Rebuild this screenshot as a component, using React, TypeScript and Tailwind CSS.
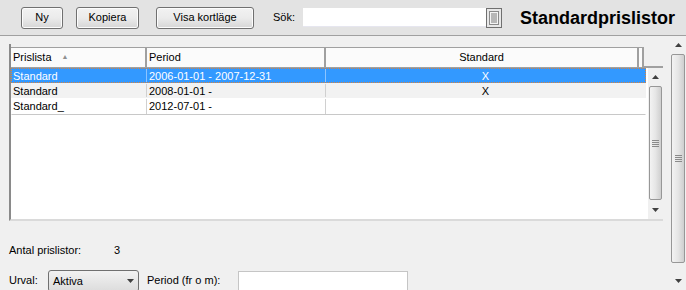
import React from 'react';

const rows = [
  { name: 'Standard', period: '2006-01-01 - 2007-12-31', std: 'X' },
  { name: 'Standard', period: '2008-01-01 -', std: 'X' },
  { name: 'Standard_', period: '2012-07-01 -', std: '' },
];

const Button: React.FC<{ label: string; width: string }> = ({ label, width }) => (
  <button
    className={`${width} h-[22px] rounded-[3px] border border-[#707070] bg-gradient-to-b from-[#f2f2f2] via-[#ebebeb] to-[#d6d6d6] text-[11px] text-black shadow-[inset_0_0_0_1px_#fcfcfc]`}
  >
    {label}
  </button>
);

const Grip: React.FC = () => (
  <div className="flex flex-col gap-[1px]">
    <div className="h-[1px] w-[7px] bg-[#8a8a8a]" />
    <div className="h-[1px] w-[7px] bg-[#8a8a8a]" />
    <div className="h-[1px] w-[7px] bg-[#8a8a8a]" />
    <div className="h-[1px] w-[7px] bg-[#8a8a8a]" />
  </div>
);

const Arrow: React.FC<{ up?: boolean }> = ({ up }) => (
  <svg width="7" height="4" viewBox="0 0 7 4">
    {up ? <path d="M0 4 L3.5 0 L7 4 Z" fill="#404040" /> : <path d="M0 0 L7 0 L3.5 4 Z" fill="#404040" />}
  </svg>
);

const ScrollBar: React.FC<{ top: string; thumb: string; bottom: string }> = ({ top, thumb, bottom }) => (
  <div className="flex h-full flex-col bg-[#f0f0f0]">
    <div className={`${top} flex items-center justify-center`}>
      <Arrow up />
    </div>
    <div
      className={`${thumb} mx-[1px] flex items-center justify-center rounded-[2px] border border-[#979797] bg-gradient-to-r from-[#f3f3f3] via-[#e6e6e6] to-[#cfcfcf]`}
    >
      <Grip />
    </div>
    <div className="flex-1" />
    <div className={`${bottom} flex items-center justify-center`}>
      <Arrow />
    </div>
  </div>
);

export default function App() {
  return (
    <div
      className="flex h-[290px] w-[686px] flex-col overflow-hidden bg-[#f0f0f0] text-[11px] text-black"
      style={{ fontFamily: '"Liberation Sans", Arial, sans-serif' }}
    >
      {/* toolbar */}
      <div className="flex h-[36px] shrink-0 items-center border-b border-[#a0a0a0] bg-[#e3e3e3] pl-[21px]">
        <Button label="Ny" width="w-[42px]" />
        <div className="ml-[13px]">
          <Button label="Kopiera" width="w-[63px]" />
        </div>
        <div className="ml-[17px]">
          <Button label="Visa kortläge" width="w-[98px]" />
        </div>
        <span className="ml-[19px]">Sök:</span>
        <div className="ml-[8px] flex h-[20px] items-center">
          <div className="h-[19px] w-[183px] border-b border-[#e6e6ef] bg-white" />
          <div className="flex h-[20px] w-[16px] items-center justify-center border border-[#707070] bg-[#e8e8e8]">
            <svg width="10" height="14" viewBox="0 0 10 14">
              <rect x="0.5" y="0.5" width="9" height="13" fill="#f4f4f4" stroke="#8a8a8a" />
              <path d="M2 3h6M2 5h6M2 7h6M2 9h6M2 11h6" stroke="#7a7a7a" strokeWidth="1" />
            </svg>
          </div>
        </div>
        <span className="ml-[18px] text-[18px] font-bold leading-none">Standardprislistor</span>
      </div>

      <div className="flex min-h-0 flex-1">
        {/* main content */}
        <div className="flex-1 pl-[9px] pt-[8px]">
          {/* grid */}
          <div className="flex h-[177px] w-[654px] flex-col border-l-2 border-b-2 border-l-[#8a8a8a] border-b-[#dadada] bg-white">
            {/* header */}
            <div className="flex h-[24px] shrink-0 border-b-2 border-[#a0a0a0] bg-[#f0f0f0] pt-[3px]">
              <div className="flex h-[20px] w-[136px] items-center border-r-2 border-t border-r-[#a0a0a0] border-t-[#a0a0a0] bg-[#fbfbfb] pl-[2px]">
                Prislista
                <span className="ml-[10px] text-[7px] text-[#909090]">▲</span>
              </div>
              <div className="flex h-[20px] w-[179px] items-center border-r-2 border-t border-r-[#a0a0a0] border-t-[#a0a0a0] bg-[#fbfbfb] pl-[2px]">
                Period
              </div>
              <div className="flex h-[20px] w-[313px] items-center justify-center border-r-2 border-t border-r-[#a0a0a0] border-t-[#a0a0a0] bg-[#fbfbfb]">
                Standard
              </div>
              <div className="h-[20px] w-[5px] border-r-2 border-t border-r-[#a0a0a0] border-t-[#a0a0a0] bg-[#fbfbfb]" />
            </div>
            {/* body */}
            <div className="flex min-h-0 flex-1">
              <div className="flex w-[635px] flex-col">
                {rows.map((r, i) => {
                  const selected = i === 0;
                  const bg = selected ? 'bg-[#3399ff] text-white' : i === 1 ? 'bg-[#f2f2f2]' : 'bg-white';
                  return (
                    <div
                      key={i}
                      className={`flex h-[15px] items-center ${bg} ${
                        selected ? 'border border-dotted border-[#d9823b]' : 'border border-transparent'
                      } ${i === 2 ? 'box-content border-b-[#c8c8c8]' : ''}`}
                    >
                      <div className={`h-full w-[135px] pl-[1px] leading-[14px] ${selected ? 'border-r border-[#8cc4ff]' : 'border-r border-[#d0d0d0]'}`}>
                        {r.name}
                      </div>
                      <div className={`h-full w-[179px] pl-[2px] leading-[14px] ${selected ? 'border-r border-[#8cc4ff]' : 'border-r border-[#d0d0d0]'}`}>
                        {r.period}
                      </div>
                      <div className="h-full flex-1 text-center leading-[14px]">{r.std}</div>
                    </div>
                  );
                })}
              </div>
              <div className="ml-[2px] w-[15px]">
                <ScrollBar top="h-[18px]" thumb="h-[114px]" bottom="h-[18px]" />
              </div>
            </div>
          </div>

          <div className="mt-[21px] flex items-center">
            <span className="w-[105px]">Antal prislistor:</span>
            <span>3</span>
          </div>

          <div className="mt-[11px] flex items-center">
            <span className="w-[39px]">Urval:</span>
            <div className="flex h-[22px] w-[91px] items-center justify-between rounded-[3px] border border-[#707070] bg-gradient-to-b from-[#f2f2f2] to-[#dcdcdc] px-[4px]">
              <span className="pt-[2px]">Aktiva</span>
              <Arrow />
            </div>
            <span className="ml-[8px] w-[91px]">Period (fr o m):</span>
            <div className="h-[20px] w-[170px] border border-[#c5c5c5] bg-white" />
          </div>
        </div>

        {/* page scrollbar */}
        <div className="w-[16px] shrink-0">
          <ScrollBar top="h-[18px]" thumb="h-[209px]" bottom="h-[18px]" />
        </div>
      </div>
    </div>
  );
}
